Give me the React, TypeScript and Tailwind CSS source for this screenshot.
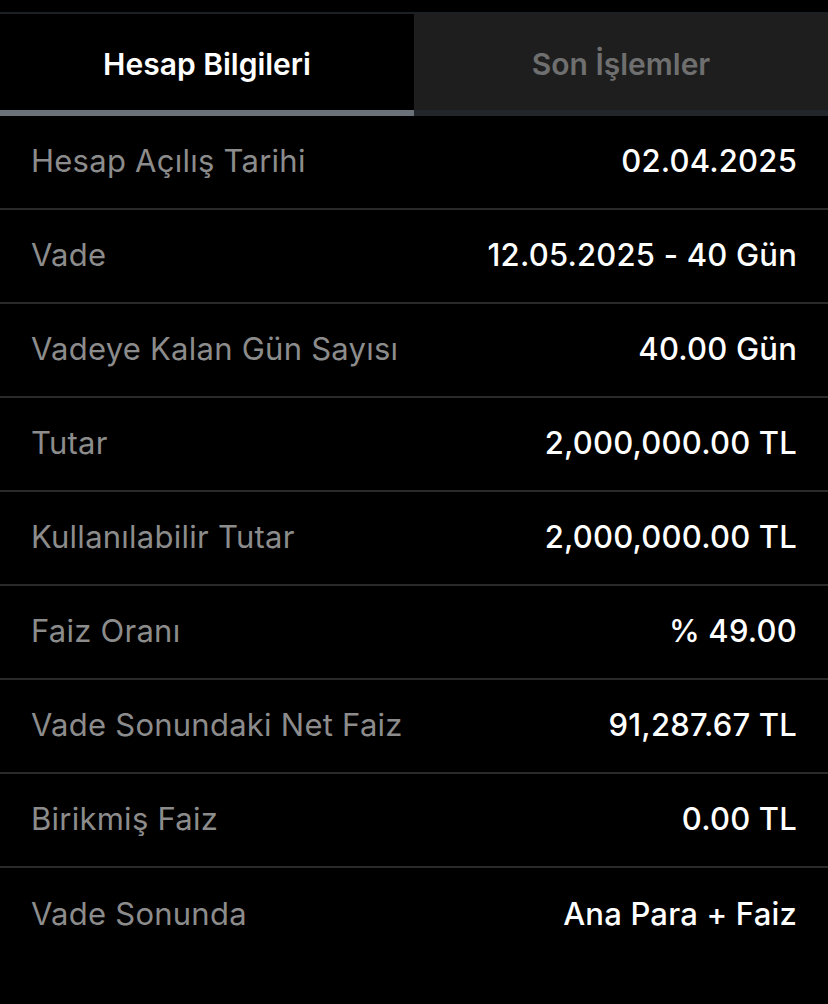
const rows: [string, string][] = [
  ["Hesap Açılış Tarihi", "02.04.2025"],
  ["Vade", "12.05.2025 - 40 Gün"],
  ["Vadeye Kalan Gün Sayısı", "40.00 Gün"],
  ["Tutar", "2,000,000.00 TL"],
  ["Kullanılabilir Tutar", "2,000,000.00 TL"],
  ["Faiz Oranı", "% 49.00"],
  ["Vade Sonundaki Net Faiz", "91,287.67 TL"],
  ["Birikmiş Faiz", "0.00 TL"],
  ["Vade Sonunda", "Ana Para + Faiz"],
];

export default function App() {
  return (
    <div
      className="min-h-[1004px] w-[828px] bg-black pt-3"
      style={{ fontFamily: "Inter, 'Noto Sans', sans-serif" }}
    >
      <div className="border-t-2 border-[#1c1f23]">
        <div className="flex h-[102px]">
          <button className="flex flex-1 flex-col bg-black">
            <span className="flex flex-1 items-center justify-center pt-1 text-[30px] font-semibold text-white">
              Hesap Bilgileri
            </span>
            <span className="h-[6px] w-full bg-[#6b7178]" />
          </button>
          <button className="flex flex-1 flex-col bg-[#1e1e1e]">
            <span className="flex flex-1 items-center justify-center pt-1 text-[30px] font-semibold text-[#6f6f6f]">
              Son İşlemler
            </span>
            <span className="h-[6px] w-full bg-[#222529]" />
          </button>
        </div>
      </div>
      <div>
        {rows.map(([label, value], i) => (
          <div
            key={label}
            className={`flex h-[94px] items-center justify-between px-[31px] pb-[2px] ${
              i < rows.length - 1 ? "border-b-2 border-[#2a2a2a]" : ""
            }`}
          >
            <span className="text-[31px] tracking-[0.25px] text-[#8c8c8c]">{label}</span>
            <span className="text-[31px] font-medium tracking-[0.2px] text-white">{value}</span>
          </div>
        ))}
      </div>
    </div>
  );
}
